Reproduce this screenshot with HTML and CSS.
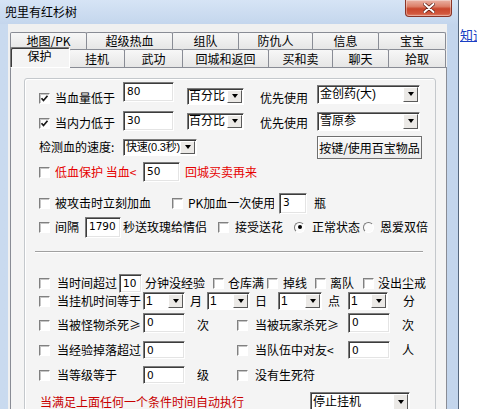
FILE: index.html
```html
<!DOCTYPE html>
<html lang="zh">
<head>
<meta charset="utf-8">
<title>兜里有红杉树</title>
<link rel="stylesheet" href="styles.css">
</head>
<body>
<div class="screen">
  <div class="window">
    <div class="titlebar">
      <span class="title">兜里有红杉树</span>
      <div class="close">
        <svg width="12" height="10" viewBox="0 0 12 10"><path d="M1.5 1 L10.5 9 M10.5 1 L1.5 9" stroke="#5a1a10" stroke-width="3.4" stroke-linecap="round"/><path d="M1.5 1 L10.5 9 M10.5 1 L1.5 9" stroke="#fff" stroke-width="2" stroke-linecap="round"/></svg>
      </div>
    </div>
    <div class="frame">
      <div class="client">
        <div class="tabrow back">
          <div class="tab w77">地图/PK</div>
          <div class="tab w87">超级热血</div>
          <div class="tab w67">组队</div>
          <div class="tab w75">防仇人</div>
          <div class="tab w67">信息</div>
          <div class="tab w68">宝宝</div>
        </div>
        <div class="tabrow front">
          <div class="tab sel w60">保护</div>
          <div class="tab w56">挂机</div>
          <div class="tab w59">武功</div>
          <div class="tab w87">回城和返回</div>
          <div class="tab w65">买和卖</div>
          <div class="tab w57">聊天</div>
          <div class="tab w58">拾取</div>
        </div>
        <div class="panel">
          <div class="group">
            <div class="row r1">
              <span class="cb ml14 dn2"><svg width="9" height="9" viewBox="0 0 9 9"><path d="M1.5 4.2 L3.5 6.5 L7.5 1.8" fill="none" stroke="#1a1a1a" stroke-width="1.7"/></svg></span>
              <span class="lbl w60 ml5 dn2">当血量低于</span>
              <span class="inp w51 ml8 up4">80</span>
              <span class="sel w57 ml13 h17"><span class="sv tight">百分比</span><span class="dd"></span></span>
              <span class="lbl w48 ml16 dn2">优先使用</span>
              <span class="sel w103 ml9 h19 up2"><span class="sv">金创药(大)</span><span class="dd"></span></span>
            </div>
            <div class="row r2">
              <span class="cb ml14 dn2"><svg width="9" height="9" viewBox="0 0 9 9"><path d="M1.5 4.2 L3.5 6.5 L7.5 1.8" fill="none" stroke="#1a1a1a" stroke-width="1.7"/></svg></span>
              <span class="lbl w60 ml5 dn2">当内力低于</span>
              <span class="inp w51 ml8">30</span>
              <span class="sel w57 ml13 h17"><span class="sv tight">百分比</span><span class="dd"></span></span>
              <span class="lbl w48 ml16 dn2">优先使用</span>
              <span class="sel w103 ml9 h19"><span class="sv">雪原参</span><span class="dd"></span></span>
            </div>
            <div class="row r3">
              <span class="lbl w84 ml14">检测血的速度:</span>
              <span class="sel w74 h17"><span class="sv sm">快速(0.3秒)</span><span class="dd"></span></span>
              <span class="btn w105 ml120">按键/使用百宝物品</span>
            </div>
            <div class="row r4">
              <span class="cb ml14"></span>
              <span class="lbl red w83 ml5">低血保护 当血&lt;</span>
              <span class="inp w37 ml5">50</span>
              <span class="lbl red w72 ml5">回城买卖再来</span>
            </div>
            <div class="row r5">
              <span class="cb ml14"></span>
              <span class="lbl w96 ml5">被攻击时立刻加血</span>
              <span class="cb ml21"></span>
              <span class="lbl w86 ml5">PK加血一次使用</span>
              <span class="inp w28 ml5 h21">3</span>
              <span class="lbl w12 ml7">瓶</span>
            </div>
            <div class="row r6">
              <span class="cb ml14"></span>
              <span class="lbl w24 ml5">间隔</span>
              <span class="inp w36 ml6 h21">1790</span>
              <span class="lbl w84 ml2">秒送玫瑰给情侣</span>
              <span class="cb ml11"></span>
              <span class="lbl w48 ml6">接受送花</span>
              <span class="rb on ml11"></span>
              <span class="lbl w48 ml7">正常状态</span>
              <span class="rb ml3"></span>
              <span class="lbl w48 ml6">恩爱双倍</span>
            </div>
            <div class="sep"></div>
            <div class="row r7">
              <span class="cb ml14"></span>
              <span class="lbl w62 ml7">当时间超过</span>
              <span class="inp w23 h19">10</span>
              <span class="lbl w60 ml3">分钟没经验</span>
              <span class="cb ml8"></span>
              <span class="lbl w36 ml4">仓库满</span>
              <span class="cb ml3"></span>
              <span class="lbl w24 ml5">掉线</span>
              <span class="cb ml8"></span>
              <span class="lbl w24 ml4">离队</span>
              <span class="cb ml9"></span>
              <span class="lbl w48 ml4">没出尘戒</span>
            </div>
            <div class="row r8">
              <span class="cb ml14"></span>
              <span class="lbl w84 ml7">当挂机时间等于</span>
              <span class="sel w42 ml2 h18"><span class="sv">1</span><span class="dd"></span></span>
              <span class="lbl w12 ml5">月</span>
              <span class="sel w43 ml5 h18"><span class="sv">1</span><span class="dd"></span></span>
              <span class="lbl w12 ml5">日</span>
              <span class="sel w44 ml11 h18"><span class="sv">1</span><span class="dd"></span></span>
              <span class="lbl w12 ml6">点</span>
              <span class="sel w40 ml8 h18"><span class="sv">1</span><span class="dd"></span></span>
              <span class="lbl w12 ml15">分</span>
            </div>
            <div class="row r9">
              <span class="cb ml14"></span>
              <span class="lbl w84 ml7">当被怪物杀死≥</span>
              <span class="inp w42 ml2 up2">0</span>
              <span class="lbl w12 ml12">次</span>
              <span class="cb ml28"></span>
              <span class="lbl w84 ml7">当被玩家杀死≥</span>
              <span class="inp w42 ml9 up2">0</span>
              <span class="lbl w12 ml12">次</span>
            </div>
            <div class="row r10">
              <span class="cb ml14"></span>
              <span class="lbl w84 ml7">当经验掉落超过</span>
              <span class="inp w42 ml2 h18">0</span>
              <span class="cb ml52"></span>
              <span class="lbl w84 ml7">当队伍中对友&lt;</span>
              <span class="inp w42 ml9 h18">0</span>
              <span class="lbl w12 ml12">人</span>
            </div>
            <div class="row r11">
              <span class="cb ml14"></span>
              <span class="lbl w84 ml7">当等级等于</span>
              <span class="inp w42 ml2 h18">0</span>
              <span class="lbl w12 ml12">级</span>
              <span class="cb ml28"></span>
              <span class="lbl w84 ml7">没有生死符</span>
            </div>
            <div class="row r12">
              <span class="lbl red2 w204 ml15">当满足上面任何一个条件时间自动执行</span>
              <span class="sel w100 ml66 h21"><span class="sv">停止挂机</span><span class="dd"></span></span>
            </div>
          </div>
        </div>
      </div>
    </div>
  </div>
  <div class="side"><span class="link">知道了</span></div>
</div>
</body>
</html>
```

FILE: styles.css
```css
* { box-sizing: border-box; }
body {
  margin: 0;
  width: 477px;
  height: 409px;
  overflow: hidden;
  background: #fff;
  font-family: "Liberation Sans", "Noto Sans CJK SC", sans-serif;
  font-size: 12px;
  color: #000;
}
.screen { display: flex; width: 477px; height: 409px; }
.window {
  width: 459px;
  flex: none;
  display: flex;
  flex-direction: column;
  background: linear-gradient(90deg, #c9daef, #c3d5ec);
  border-right: 1px solid #56677d;
}
.titlebar {
  height: 24px;
  flex: none;
  display: flex;
  align-items: flex-start;
  padding: 0 6px 0 5px;
  background: linear-gradient(#d6e4f5, #c4d6ed);
}
.title {
  margin-top: 4px;
  line-height: 16px;
  font-family: "Noto Sans CJK SC", sans-serif;
  font-size: 12px;
  color: #000;
}
.close {
  margin-left: auto;
  width: 47px;
  height: 17px;
  border: 1px solid #8a3426;
  border-top: none;
  border-radius: 0 0 4px 4px;
  background: linear-gradient(#eab2a4, #dc8069 40%, #c9462c 55%, #d2583e 85%, #e0866e);
  box-shadow: inset 0 0 0 1px rgba(255,255,255,0.35);
  display: flex;
  align-items: center;
  justify-content: center;
}
.frame { flex: 1; display: flex; padding: 0 11px 0 8px; min-height: 0; }
.client {
  width: 439px;
  flex: none;
  background: #f0f0f0;
  padding: 8px 0 0 2px;
  overflow: hidden;
}
.tabrow { display: flex; }
.back { height: 17px; }
.front { height: 18px; position: relative; z-index: 1; }
.tab {
  height: 100%;
  flex: none;
  border: 1px solid #898c95;
  border-bottom: none;
  border-radius: 2px 2px 0 0;
  margin-left: -1px;
  background: linear-gradient(#f7f7f7, #e6e6e6);
  display: flex;
  align-items: center;
  justify-content: center;
  font-family: "Noto Sans CJK SC", sans-serif;
  font-size: 12px;
  line-height: 14px;
  color: #000;
}
.tab:first-child { margin-left: 0; }
.tab.sel {
  height: 21px;
  margin-top: -2px;
  align-self: flex-start;
  background: #f4f4f4;
  position: relative;
  z-index: 2;
}
.w56 { width: 56px; } .w57 { width: 57px; } .w58 { width: 58px; } .w59 { width: 59px; }
.w65 { width: 65px; } .w67 { width: 67px; } .w68 { width: 68px; } .w75 { width: 75px; }
.w77 { width: 77px; } .w87 { width: 87px; }
.panel {
  width: 437px;
  height: 350px;
  border: 1px solid #898c95;
  background: #f4f4f4;
  padding: 10px 0 0 13px;
}
.group {
  width: 412px;
  height: 400px;
  border: 1px solid #c4c8cc;
  border-radius: 3px;
  box-shadow: inset 1px 1px 0 #fff;
  display: flex;
  flex-direction: column;
}
.row {
  height: 18px;
  flex: none;
  display: flex;
  align-items: center;
}
.r1 { margin-top: 8px; } .r2 { margin-top: 7px; } .r3 { margin-top: 8px; }
.r4 { margin-top: 7px; } .r5 { margin-top: 13px; } .r6 { margin-top: 6px; }
.r7 { margin-top: 21px; } .r8 { margin-top: 0; } .r9 { margin-top: 6px; }
.r10 { margin-top: 7px; } .r11 { margin-top: 7px; } .r12 { margin-top: 9px; }
.sep {
  flex: none;
  margin: 15px 0 0 10px;
  width: 388px;
  height: 2px;
  border-top: 1px solid #a0a0a0;
  border-bottom: 1px solid #fff;
}
.lbl {
  flex: none;
  white-space: nowrap;
  overflow: hidden;
  line-height: 18px;
  font-family: "Noto Sans CJK SC", sans-serif;
  font-size: 12px;
  color: #000;
}
.red { color: #e60000; }
.red2 { color: #c80000; }
.cb {
  flex: none;
  width: 11px;
  height: 11px;
  background: #fff;
  border: 1px solid;
  border-color: #808080 #fff #fff #808080;
  box-shadow: inset 1px 1px 0 #c6c6c6;
  display: flex;
  align-items: center;
  justify-content: center;
}
.cb svg { display: block; }
.rb {
  flex: none;
  width: 11px;
  height: 11px;
  border-radius: 50%;
  background: #fbfbfb;
  border: 1px solid;
  border-color: #7a7a7a #fff #fff #7a7a7a;
  display: flex;
  align-items: center;
  justify-content: center;
}
.rb.on::after {
  content: "";
  width: 4px;
  height: 4px;
  border-radius: 50%;
  background: #000;
}
.inp {
  flex: none;
  height: 20px;
  background: #fff;
  border: 1px solid;
  border-color: #7c7c7c #fff #fff #7c7c7c;
  box-shadow: inset 1px 1px 0 #3c3c3c, inset -1px -1px 0 #e4e4e4;
  padding: 2px 0 0 3px;
  font-family: "DejaVu Sans", sans-serif;
  font-size: 10.5px;
  line-height: 12px;
  color: #000;
  overflow: hidden;
  white-space: nowrap;
}
.sel {
  flex: none;
  height: 18px;
  display: flex;
  align-items: stretch;
  background: #fff;
  border: 1px solid;
  border-color: #7c7c7c #fff #fff #7c7c7c;
  box-shadow: inset 1px 1px 0 #3c3c3c;
  padding: 1px 1px 1px 0;
  overflow: hidden;
}
.sv {
  flex: 1;
  min-width: 0;
  overflow: hidden;
  white-space: nowrap;
  padding-left: 2px;
  display: flex;
  align-items: center;
  font-family: "Liberation Sans", "Noto Sans CJK SC", sans-serif;
  font-size: 12px;
  line-height: 13px;
  color: #000;
}
.sv.tight { padding-left: 1px; }
.sv.sm { font-size: 11px; padding-left: 2px; letter-spacing: -0.2px; line-height: 12px; }
.dd {
  flex: none;
  width: 15px;
  background: #ebe9e6;
  border: 1px solid;
  border-color: #fff #5a5a5a #5a5a5a #fff;
  display: flex;
  align-items: center;
  justify-content: center;
}
.dd::after {
  content: "";
  width: 0;
  height: 0;
  border-left: 3.5px solid transparent;
  border-right: 3.5px solid transparent;
  border-top: 4px solid #000;
}
.btn {
  flex: none;
  height: 23px;
  border: 1px solid #6f6f6f;
  background: linear-gradient(#f8f8f8, #ececec);
  box-shadow: inset 1px 1px 0 #fff;
  display: flex;
  align-items: center;
  justify-content: center;
  font-family: "Noto Sans CJK SC", sans-serif;
  font-size: 12px;
  white-space: nowrap;
  color: #000;
}
.h17 { height: 17px; } .h18 { height: 18px; } .h19 { height: 19px; }
.h21 { height: 21px; }
.up2 { margin-bottom: 4px; } .up4 { margin-bottom: 8px; } .dn2 { margin-top: 4px; }
.w12 { width: 12px; } .w23 { width: 23px; } .w24 { width: 24px; } .w28 { width: 28px; }
.w36 { width: 36px; } .w37 { width: 37px; } .w40 { width: 40px; } .w42 { width: 42px; }
.w43 { width: 43px; } .w44 { width: 44px; } .w48 { width: 48px; } .w51 { width: 51px; }
.w60 { width: 60px; } .w62 { width: 62px; } .w72 { width: 72px; } .w74 { width: 74px; }
.w83 { width: 83px; } .w84 { width: 84px; } .w86 { width: 86px; } .w96 { width: 96px; }
.w100 { width: 100px; } .w103 { width: 103px; } .w105 { width: 105px; } .w204 { width: 204px; }
.ml2 { margin-left: 2px; } .ml3 { margin-left: 3px; } .ml4 { margin-left: 4px; }
.ml5 { margin-left: 5px; } .ml6 { margin-left: 6px; } .ml7 { margin-left: 7px; }
.ml8 { margin-left: 8px; } .ml9 { margin-left: 9px; } .ml11 { margin-left: 11px; }
.ml12 { margin-left: 12px; } .ml13 { margin-left: 13px; } .ml14 { margin-left: 14px; }
.ml15 { margin-left: 15px; } .ml16 { margin-left: 16px; } .ml21 { margin-left: 21px; }
.ml28 { margin-left: 28px; } .ml52 { margin-left: 52px; } .ml66 { margin-left: 66px; }
.ml120 { margin-left: 120px; }
.side {
  flex: 1;
  min-width: 0;
  background: #fff;
  padding: 27px 0 0 1px;
  overflow: hidden;
}
.link {
  display: block;
  white-space: nowrap;
  font-family: "Noto Sans CJK SC", sans-serif;
  font-size: 13px;
  line-height: 16px;
  color: #1a3fc4;
  text-decoration: underline;
}
```
